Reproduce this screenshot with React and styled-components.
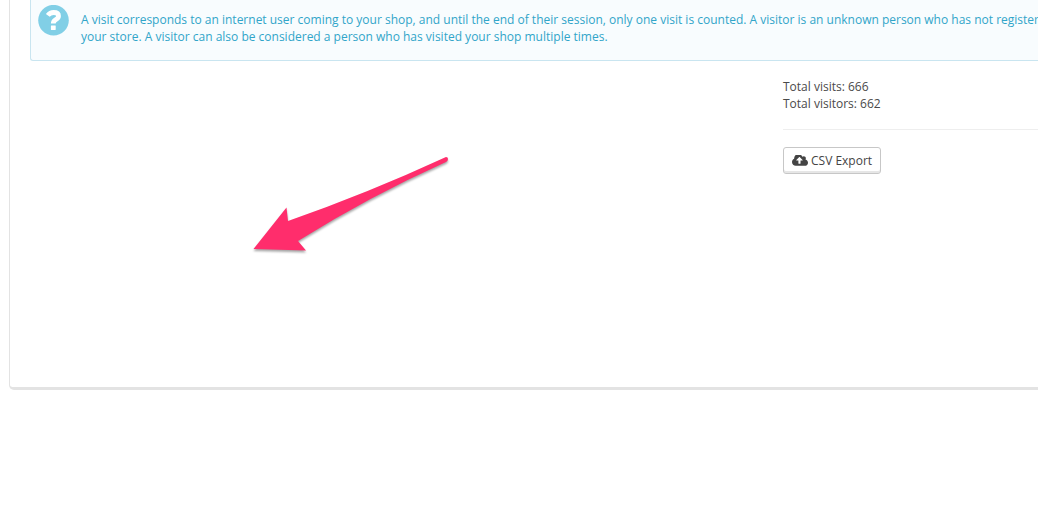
import React from 'react';
import styled, { createGlobalStyle } from 'styled-components';

const GlobalStyle = createGlobalStyle`
  * {
    box-sizing: border-box;
  }

  body {
    margin: 0;
    background-color: white;
    color: #4a4a4a;
    font-family: 'Open Sans', 'Noto Sans', sans-serif;
    font-size: 12px;
    line-height: 17px;
    overflow-x: hidden;
  }
`;

const Panel = styled.section`
  margin-left: 9px;
  min-height: 390px;
  padding-left: 20px;
  border-left: 1px solid #e3e3e3;
  border-bottom: 3px solid #e3e3e3;
  border-bottom-left-radius: 5px;
`;

const Alert = styled.div`
  display: flex;
  gap: 12px;
  padding: 5px 0 15px 7px;
  border: 1px solid #c9e5f0;
  border-width: 0 0 1px 1px;
  border-bottom-left-radius: 3px;
  background-color: #f8fcfe;
  color: #31a5c9;
  overflow: hidden;
`;

const HelpIcon = styled.svg`
  flex: none;
  width: 31px;
  height: 31px;
`;

const AlertText = styled.p`
  margin: 0;
  padding-top: 6px;
  white-space: nowrap;
`;

const Content = styled.div`
  display: grid;
  grid-template-columns: 1fr 255px;
  padding-top: 17px;
`;

const ChartArea = styled.div`
  padding: 75px 0 0 220px;
`;

const Arrow = styled.svg`
  display: block;
  width: 204px;
  height: 104px;
  fill: #ff2d6c;
  filter: drop-shadow(0 2px 1px rgba(0, 0, 0, 0.35));
`;

const Totals = styled.ul`
  margin: 0;
  padding: 0;
  list-style: none;
`;

const Divider = styled.hr`
  margin: 17px 0;
  border: 0;
  border-top: 1px solid #eee;
`;

const Button = styled.button`
  display: flex;
  align-items: center;
  gap: 3px;
  height: 27px;
  padding: 0 8px;
  border: 1px solid #c7c7c7;
  border-radius: 3px;
  background-color: white;
  box-shadow: inset 0 -2px 0 #e6e6e6;
  color: #444;
  font: inherit;
  cursor: pointer;
`;

const CloudIcon = styled.svg`
  width: 16px;
  height: 11px;
  fill: currentColor;
`;

const totals = [
  { label: 'Total visits', value: 666 },
  { label: 'Total visitors', value: 662 },
];

const App = () => {
  return (
    <>
      <GlobalStyle />
      <Panel>
        <Alert>
          <HelpIcon viewBox="0 0 31 31" aria-hidden="true">
            <circle cx="15.5" cy="15.2" r="15.3" fill="#81cfe6" />
            <path d="M9.8 10.4Q12 7.5 15.6 7.5Q20.5 7.5 20.5 11Q20.5 13.2 17.8 14.6Q15.3 16 15.3 18.5" fill="none" stroke="#fff" strokeWidth="4.8" />
            <rect x="12.9" y="20.4" width="4.8" height="4.6" rx="0.4" fill="#fff" />
          </HelpIcon>
          <AlertText>
            A visit corresponds to an internet user coming to your shop, and until the end of their session, only one visit is counted. A visitor is an unknown person who has not register
            <br />
            your store. A visitor can also be considered a person who has visited your shop multiple times.
          </AlertText>
        </Alert>
        <Content>
          <ChartArea>
            {/* Arrow pointing at the empty chart */}
            <Arrow viewBox="250 153 204 104" aria-hidden="true">
              <path d="M253.5 249L286.5 207.5L288 221Q368 193 446 157Q448 157 448 159Q448 161 446 162Q370 196 298 241L306 250.5Z" />
            </Arrow>
          </ChartArea>
          <div>
            <Totals>
              {totals.map(({ label, value }) => (
                <li key={label}>{label}: {value}</li>
              ))}
            </Totals>
            <Divider />
            <Button type="button">
              <CloudIcon viewBox="0 256 1920 1280" aria-hidden="true">
                <path d="M1280 864q0-14-9-23l-352-352q-9-9-23-9t-23 9l-351 351q-10 12-10 24 0 14 9 23t23 9h224v352q0 13 9.5 22.5t22.5 9.5h192q13 0 22.5-9.5t9.5-22.5v-352h224q13 0 22.5-9.5t9.5-22.5zm640 288q0 159-112.5 271.5t-271.5 112.5h-1088q-185 0-316.5-131.5t-131.5-316.5q0-130 70-240t188-165q-2-30-2-43 0-212 150-362t362-150q156 0 285.5 87t188.5 231q71-62 166-62 106 0 181 75t75 181q0 76-41 138 130 31 213.5 135.5t83.5 238.5z" />
              </CloudIcon>
              CSV Export
            </Button>
          </div>
        </Content>
      </Panel>
    </>
  );
};

export default App;
